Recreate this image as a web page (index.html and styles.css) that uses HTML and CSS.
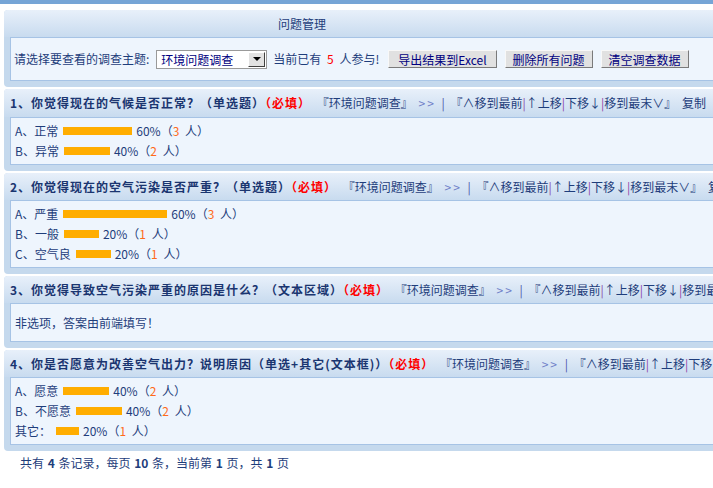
FILE: index.html
```html
<!DOCTYPE html>
<html lang="zh-CN">
<head>
<meta charset="utf-8">
<title>问题管理</title>
<link rel="stylesheet" href="styles.css">
</head>
<body>
<div class="topbar"></div>
<div class="wrap">
  <div class="panel">
    <div class="head title">问题管理</div>
    <div class="box toolbar">
      <span>请选择要查看的调查主题:</span>
      <span class="select"><span class="select-text">环境问题调查</span><span class="select-btn"><i class="tri"></i></span></span>
      <span>当前已有 <em class="red">5</em> 人参与!</span>
      <button class="btn first">导出结果到Excel</button>
      <button class="btn">删除所有问题</button>
      <button class="btn">清空调查数据</button>
    </div>
  </div>

  <div class="panel">
    <div class="head q1"><b class="qtitle">1、你觉得现在的气候是否正常？（单选题）</b><b class="req">（必填）</b> <span>『环境问题调查』 <span class="more">&gt;&gt;</span> <span class="pipe">|</span> 『∧移到最前<span class="sep">|</span>↑上移<span class="sep">|</span>下移↓<span class="sep">|</span>移到最末∨』 复制</span></div>
    <div class="box">
      <div class="opt"><span>A、正常</span><span class="bar" style="width:69px"></span><span>60%（<em class="num">3</em> 人）</span></div>
      <div class="opt"><span>B、异常</span><span class="bar" style="width:46px"></span><span>40%（<em class="num">2</em> 人）</span></div>
    </div>
  </div>

  <div class="panel">
    <div class="head"><b class="qtitle">2、你觉得现在的空气污染是否严重？（单选题）</b><b class="req">（必填）</b> <span>『环境问题调查』 <span class="more">&gt;&gt;</span> <span class="pipe">|</span> 『∧移到最前<span class="sep">|</span>↑上移<span class="sep">|</span>下移↓<span class="sep">|</span>移到最末∨』 复制</span></div>
    <div class="box">
      <div class="opt"><span>A、严重</span><span class="bar" style="width:104px"></span><span>60%（<em class="num">3</em> 人）</span></div>
      <div class="opt"><span>B、一般</span><span class="bar" style="width:35px"></span><span>20%（<em class="num">1</em> 人）</span></div>
      <div class="opt"><span>C、空气良</span><span class="bar" style="width:35px"></span><span>20%（<em class="num">1</em> 人）</span></div>
    </div>
  </div>

  <div class="panel">
    <div class="head"><b class="qtitle">3、你觉得导致空气污染严重的原因是什么？（文本区域）</b><b class="req">（必填）</b> <span>『环境问题调查』 <span class="more">&gt;&gt;</span> <span class="pipe">|</span> 『∧移到最前<span class="sep">|</span>↑上移<span class="sep">|</span>下移↓<span class="sep">|</span>移到最末∨』 复制</span></div>
    <div class="box text-box">非选项，答案由前端填写！</div>
  </div>

  <div class="panel">
    <div class="head"><b class="qtitle">4、你是否愿意为改善空气出力？说明原因（单选+其它(文本框)）</b><b class="req">（必填）</b> <span>『环境问题调查』 <span class="more">&gt;&gt;</span> <span class="pipe">|</span> 『∧移到最前<span class="sep">|</span>↑上移<span class="sep">|</span>下移↓<span class="sep">|</span>移到最末∨』 复制</span></div>
    <div class="box">
      <div class="opt"><span>A、愿意</span><span class="bar" style="width:46px"></span><span>40%（<em class="num">2</em> 人）</span></div>
      <div class="opt"><span>B、不愿意</span><span class="bar" style="width:46px"></span><span>40%（<em class="num">2</em> 人）</span></div>
      <div class="opt"><span>其它：</span><span class="bar" style="width:23px"></span><span>20%（<em class="num">1</em> 人）</span></div>
    </div>
  </div>

  <div class="footer">共有 <b>4</b> 条记录，每页 <b>10</b> 条，当前第 <b>1</b> 页，共 <b>1</b> 页</div>
</div>
</body>
</html>
```
FILE: styles.css
```css
html, body {
  margin: 0;
  padding: 0;
  background: #fff;
}
body {
  font: 12px/20px "Noto Sans CJK SC", "Liberation Sans", sans-serif;
  color: #1e3d7b;
  word-spacing: 3px;
}
em { font-style: normal; }

.topbar {
  height: 4px;
  background: #76a5d6;
  margin-bottom: 6px;
}
.wrap {
  padding-left: 4px;
  overflow: hidden;
}
.panel {
  width: 900px;
  background: #c5d9ed;
  border-radius: 4px 0 0 4px;
  padding-bottom: 6px;
  margin-bottom: 2px;
}
.head {
  height: 27px;
  line-height: 27px;
  padding-left: 6px;
  background: linear-gradient(#e8f0fa, #c8dbef);
  border-radius: 4px 0 0 0;
  white-space: nowrap;
}
.head.q1 { height: 28px; line-height: 28px; }
.title { padding-left: 274px; }
.qtitle {
  color: #1a3570;
  letter-spacing: 1px;
}
.req {
  color: #f00;
  letter-spacing: 1px;
}
.more { color: #6f7fc8; letter-spacing: 2px; }
.pipe { color: #4a56a8; }
.sep { color: #8a3fa6; }

.box {
  margin-left: 6px;
  background: #eef5fd;
  border: 1px solid #a6c3e5;
  border-right: none;
  padding: 3px 0 3px 4px;
}
.toolbar {
  height: 42px;
  padding: 0 0 0 3px;
  display: flex;
  align-items: center;
  white-space: nowrap;
}
.text-box {
  padding-top: 9px;
  padding-bottom: 8px;
}
.red { color: #f00; }

.select {
  display: inline-flex;
  align-items: stretch;
  width: 109px;
  height: 17px;
  border: 1px solid #9a9a9a;
  background: #fff;
  margin: 0 6px 0 7px;
}
.select-text {
  flex: 1;
  color: #000080;
  line-height: 17px;
  padding-left: 4px;
}
.select-btn {
  width: 15px;
  margin: 1px;
  background: #e2e2e2;
  border: 1px solid;
  border-color: #fff #404040 #404040 #fff;
  display: flex;
  align-items: center;
  justify-content: center;
}
.tri {
  width: 0;
  height: 0;
  border-left: 4px solid transparent;
  border-right: 4px solid transparent;
  border-top: 4px solid #000;
}

.btn {
  font: inherit;
  word-spacing: 0;
  height: 18px;
  line-height: 15px;
  padding: 0 7px;
  background: #e1e1e1;
  border: 1px solid;
  border-color: #f8f8f8 #7a7a7a #7a7a7a #f8f8f8;
  color: #000080;
  margin-left: 8px;
}
.btn.first { margin-left: 9px; padding: 0 9px; }

.opt {
  display: flex;
  align-items: center;
  height: 20px;
  white-space: nowrap;
}
.bar {
  display: inline-block;
  height: 8px;
  background: #ffad00;
  margin: 0 4px 0 5px;
}
.num { color: #ff6a1a; }

.footer {
  padding-left: 16px;
  line-height: 20px;
  word-spacing: 1px;
}
.footer b { font-weight: bold; }
```
